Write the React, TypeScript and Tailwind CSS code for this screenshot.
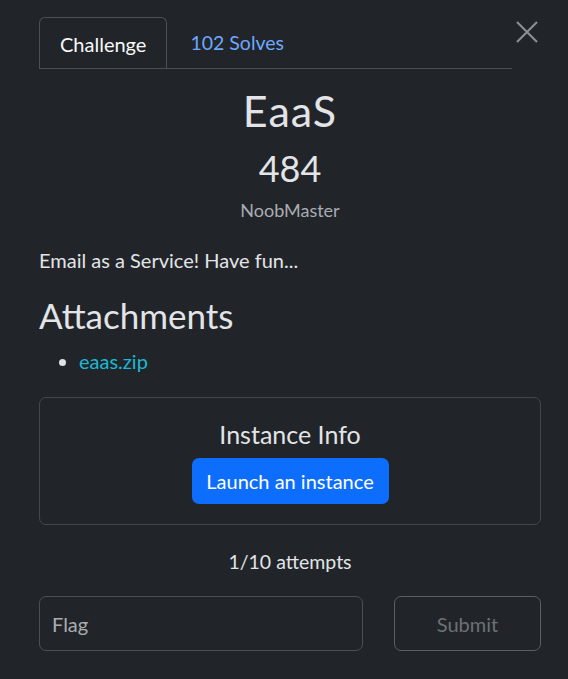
import React from "react";

function CloseIcon() {
  return (
    <svg width="22" height="22" viewBox="0 0 22 22" fill="none">
      <path d="M1 1L21 21M21 1L1 21" stroke="#8a8e93" strokeWidth="2.2" />
    </svg>
  );
}

export default function App() {
  return (
    <div
      className="w-[568px] h-[679px] bg-[#212529] text-[#dee2e6] overflow-hidden"
      style={{ fontFamily: "Lato, 'Noto Sans', sans-serif" }}
    >
      <div className="pt-[17px] pl-[39px] pr-[27px]">
        {/* tabs + close */}
        <div className="flex items-start">
          <div className="flex w-[473px] border-b border-[#495057]">
            <div className="h-[51px] px-[20px] pt-[1px] flex items-center border border-b-0 border-[#495057] rounded-t-[6px] bg-[#212529] -mb-px text-[20px] text-[#f8f9fa]">
              Challenge
            </div>
            <div className="h-[51px] px-[23px] pt-[1px] flex items-center text-[19.5px] text-[#6ea8fe]">
              102 Solves
            </div>
          </div>
          <button className="ml-[4px] mt-[4px] w-[22px] h-[22px] flex items-center justify-center">
            <CloseIcon />
          </button>
        </div>

        {/* header */}
        <div className="flex flex-col items-center">
          <h2 className="mt-[17px] h-[50px] leading-[50px] text-[43px] text-[#e2e4e7] tracking-[1px]">EaaS</h2>
          <h3 className="mt-[11px] h-[43px] leading-[43px] text-[36px] text-[#e2e4e7]">484</h3>
          <div className="mt-[8px] h-[24px] leading-[24px] text-[18px] text-[#a9adb2]">NoobMaster</div>
        </div>

        {/* description */}
        <p className="mt-[26px] h-[24px] leading-[24px] text-[20px] text-[#e2e4e7]">Email as a Service! Have fun...</p>

        <h3 className="mt-[22px] h-[42px] leading-[42px] text-[35px] text-[#e2e4e7]">Attachments</h3>
        <ul className="mt-[10px] pl-[40px] list-disc marker:text-[#dee2e6]">
          <li className="h-[30px] leading-[30px] text-[20px]">
            <a className="text-[#1bb8d4]">eaas.zip</a>
          </li>
        </ul>

        {/* instance */}
        <div className="mt-[21px] h-[128px] border border-[#42474d] rounded-[7px] flex flex-col items-center">
          <div className="mt-[21px] h-[30px] leading-[30px] text-[25px] text-[#e2e4e7]">Instance Info</div>
          <button className="mt-[9px] h-[46px] w-[197px] rounded-[7px] bg-[#0d6efd] text-white text-[20px]">
            Launch an instance
          </button>
        </div>

        <div className="mt-[25px] h-[24px] leading-[24px] text-center text-[19.5px] text-[#e2e4e7]">1/10 attempts</div>

        <div className="mt-[22px] flex gap-[31px]">
          <div className="w-[324px] h-[55px] border border-[#4b5056] rounded-[7px] flex items-center pl-[12px] text-[20px] text-[#a9adb2]">
            Flag
          </div>
          <button className="w-[147px] h-[55px] border border-[#5a5f65] rounded-[7px] text-[20px] text-[#6c7176]">
            Submit
          </button>
        </div>
      </div>
    </div>
  );
}
